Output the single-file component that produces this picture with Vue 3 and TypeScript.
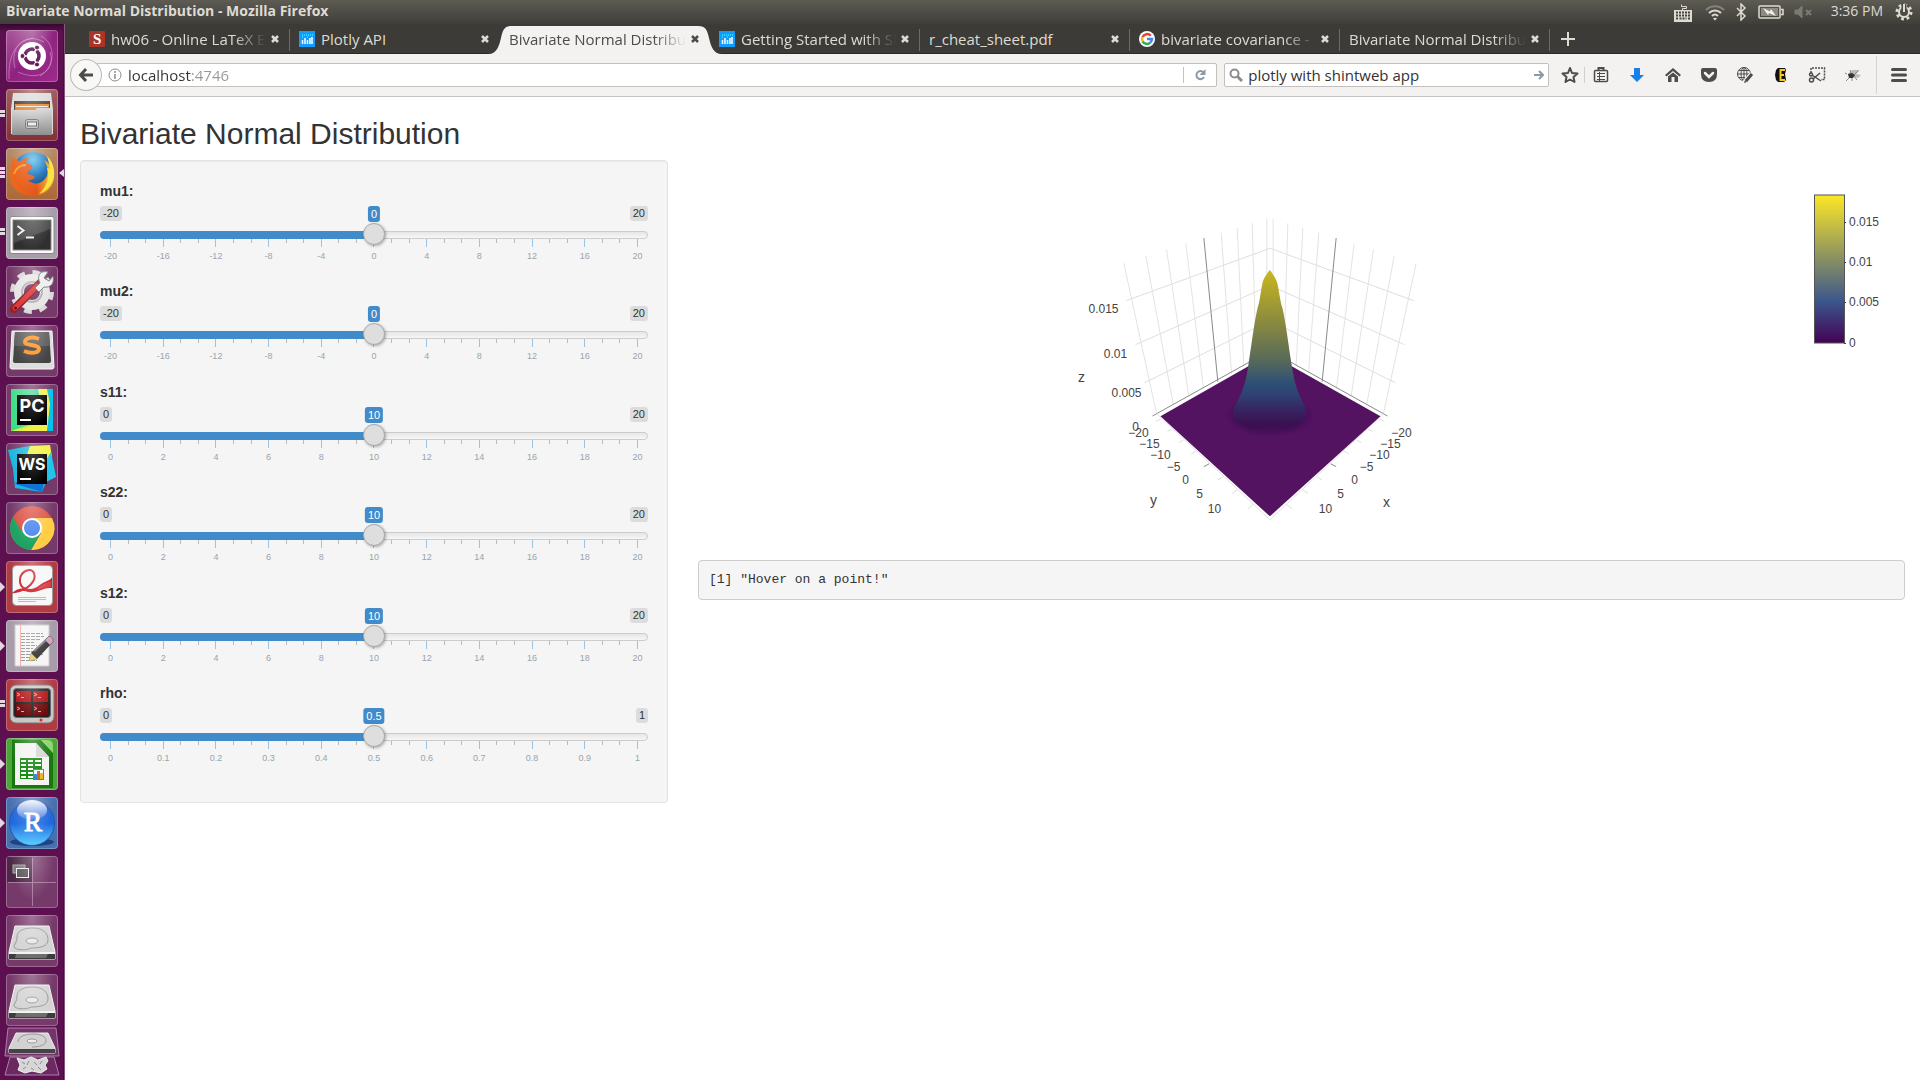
<script setup lang="ts">
import { reactive, ref } from 'vue'

interface Tab {
  title: string
  icon: 'sharelatex' | 'plotly' | 'google' | ''
  faded: boolean
}

interface Slider {
  id: string
  min: number
  max: number
  step: number
  value: number
}

interface Mark {
  x: number
  y: number
  text: string
}

const tabs: Tab[] = [
  { title: 'hw06 - Online LaTeX Editor', icon: 'sharelatex', faded: true },
  { title: 'Plotly API', icon: 'plotly', faded: false },
  { title: 'Bivariate Normal Distribution', icon: '', faded: true },
  { title: 'Getting Started with Shiny', icon: 'plotly', faded: true },
  { title: 'r_cheat_sheet.pdf', icon: '', faded: false },
  { title: 'bivariate covariance - Google', icon: 'google', faded: true },
  { title: 'Bivariate Normal Distribution', icon: '', faded: true },
]
const activeTab = ref(2)
const address = ref('localhost:4746')
const query = ref('plotly with shintweb app')

const sliders = reactive<Slider[]>([
  { id: 'mu1', min: -20, max: 20, step: 1, value: 0 },
  { id: 'mu2', min: -20, max: 20, step: 1, value: 0 },
  { id: 's11', min: 0, max: 20, step: 1, value: 10 },
  { id: 's22', min: 0, max: 20, step: 1, value: 10 },
  { id: 's12', min: 0, max: 20, step: 1, value: 10 },
  { id: 'rho', min: 0, max: 1, step: 0.1, value: 0.5 },
])

const percent = (s: Slider) => ((s.value - s.min) / (s.max - s.min)) * 100
const gridLabels = (s: Slider) =>
  Array.from({ length: 11 }, (_, i) => Number((s.min + ((s.max - s.min) * i) / 10).toFixed(1)))

// Wall lines of the left pane; the right pane is the mirror image.
const wallLines = [
  [193, 190, 291, 640],
  [259, 168, 341, 612],
  [321, 148, 388, 588],
  [379, 130, 432, 566],
  [485, 98, 516, 520],
  [533, 84, 553, 498],
  [578, 70, 590, 480],
  [622, 57, 622, 460],
]
const levels = [
  [200, 302, 631, 145],
  [228, 434, 631, 257],
  [256, 548, 631, 362],
]
const edgeTicks = [
  [289, 664, 303, 657],
  [324, 694, 338, 687],
  [358, 728, 372, 720],
  [395, 762, 409, 754],
  [475, 840, 491, 830],
  [518, 880, 534, 869],
  [566, 926, 582, 913],
]

const yMarks: Mark[] = [
  { x: 79, y: 237, text: '−20' },
  { x: 90, y: 248, text: '−15' },
  { x: 101, y: 259, text: '−10' },
  { x: 114, y: 271, text: '−5' },
  { x: 126, y: 284, text: '0' },
  { x: 140, y: 298, text: '5' },
  { x: 155, y: 313, text: '10' },
]
const xMarks: Mark[] = [
  { x: 342, y: 237, text: '−20' },
  { x: 331, y: 248, text: '−15' },
  { x: 320, y: 259, text: '−10' },
  { x: 307, y: 271, text: '−5' },
  { x: 295, y: 284, text: '0' },
  { x: 281, y: 298, text: '5' },
  { x: 266, y: 313, text: '10' },
]
const zMarks: Mark[] = [
  { x: 44, y: 113, text: '0.015' },
  { x: 56, y: 158, text: '0.01' },
  { x: 67, y: 197, text: '0.005' },
  { x: 76, y: 231, text: '0' },
]
const scaleMarks: Mark[] = [
  { x: 36, y: 62, text: '0.015' },
  { x: 36, y: 102, text: '0.01' },
  { x: 36, y: 142, text: '0.005' },
  { x: 36, y: 183, text: '0' },
]
</script>

<template>
  <div class="desktop">
    <header class="panel">
      <span class="panel-title">Bivariate Normal Distribution - Mozilla Firefox</span>
      <div class="indicators">
        <svg class="i-kbd" viewBox="0 0 20 20" width="20" height="20" fill="none" stroke="#dfdbd2">
          <path d="M9.500 8V6.500H13.500V4.500H8.500V2.500" />
          <rect x="1.500" y="8.500" width="17" height="11" fill="#dfdbd2" />
          <path d="M3 10.500H17M3 13.500H17M3 16.500H5M15 16.500H17M6.500 16.500H13.500" stroke="#45443f" stroke-width="2" stroke-dasharray="2 1" />
        </svg>
        <svg class="i-wifi" viewBox="0 0 22 18" width="22" height="18" fill="none" stroke="#dfdbd2" stroke-width="2">
          <path d="M2 7C7 2 15 2 20 7" stroke="#85827a" />
          <path d="M5 10C8.500 6.500 13.500 6.500 17 10M8 13C10 11 12 11 14 13" />
          <path d="M9 15.500L11 17.500L13 15.500Q11 14 9 15.500Z" fill="#dfdbd2" stroke="none" />
        </svg>
        <svg class="i-bt" viewBox="0 0 12 18" width="12" height="18" fill="none" stroke="#dfdbd2" stroke-width="1.500">
          <path d="M2 5L10 13L6 17V1L10 5L2 13" />
        </svg>
        <svg class="i-bat" viewBox="0 0 26 14" width="26" height="14" fill="none" stroke="#dfdbd2" stroke-width="1.500">
          <rect x="1" y="1" width="21" height="12" rx="1" />
          <path d="M23 4.500H25V9.500H23" />
          <rect x="3" y="3" width="17" height="8" fill="#8d8a82" stroke="none" />
          <path d="M5 3L12 6.500L13 4L18 11L11 8L10 10Z" fill="#f4f1ea" stroke="none" />
        </svg>
        <svg class="i-vol" viewBox="0 0 20 14" width="20" height="14" fill="#7d7a73" stroke="#7d7a73">
          <path d="M1 5H4L8 1V13L4 9H1Z" />
          <path d="M12 5L17 10M17 5L12 10" stroke-width="2" />
        </svg>
        <time class="clock">3:36 PM</time>
        <svg class="i-gear" viewBox="0 0 18 18" width="18" height="18" fill="none" stroke="#dfdbd2">
          <circle cx="9" cy="9" r="7" stroke-width="3" stroke-dasharray="2.750 2.750" />
          <circle cx="9" cy="9" r="5" stroke-width="2" />
          <path d="M9 1V9" stroke="#4b4a44" stroke-width="5" />
          <path d="M9 1V9" stroke-width="2" />
        </svg>
      </div>
    </header>

    <div class="body">
      <nav class="launcher" aria-label="Launcher">
        <a class="tile dash" href="#" aria-label="Dash">
          <svg viewBox="0 0 52 52">
            <g fill="none" stroke="#d79bc8" stroke-opacity=".6">
              <path d="M3 49C2 22 12 10 28 8M9 38C3 16 20 2 38 12M44 22C50 40 34 52 12 42M35 6C50 14 50 36 34 46" />
            </g>
            <circle cx="26" cy="26" r="14" fill="#fff" />
            <circle cx="26" cy="26" r="7" fill="none" stroke="#5a0f4e" stroke-width="3.500" />
            <path d="M26 26L35 26M26 26L21 18M26 26L21 34" transform="rotate(180 26 26)" stroke="#fff" stroke-width="1.500" />
            <g fill="#5a0f4e" stroke="#fff" stroke-width="1">
              <circle cx="16.500" cy="26" r="2.500" /><circle cx="31" cy="17.500" r="2.500" /><circle cx="31" cy="34.500" r="2.500" />
            </g>
          </svg>
        </a>
        <a class="tile files" href="#" aria-label="Files">
          <svg viewBox="0 0 52 52">
            <defs>
              <linearGradient id="steel" x1="0" y1="0" x2="0" y2="1"><stop offset="0" stop-color="#d9d9d9" /><stop offset="1" stop-color="#8f8f8f" /></linearGradient>
            </defs>
            <path d="M7 4H45L47 20V45H5V20Z" fill="#dcdcdc" />
            <path d="M8 12H44V24H8Z" fill="#54453c" />
            <path d="M9 15H43V22H9Z" fill="#e08b35" /><path d="M10 17H42V18H10Z" fill="#fbeadb" />
            <path d="M6 21H29L31 19H46V46H6Z" fill="url(#steel)" />
            <rect x="19.500" y="30.500" width="13" height="9" rx="2" fill="#c8c8c8" stroke="#777" />
            <rect x="21.500" y="33" width="9" height="4" fill="#eee" stroke="#666" />
          </svg>
          <i class="pips two"></i>
        </a>
        <a class="tile firefox" href="#" aria-label="Firefox">
          <svg viewBox="0 0 52 52">
            <defs>
              <radialGradient id="globe" cx=".5" cy=".2" r=".8"><stop offset="0" stop-color="#5fc3f0" /><stop offset=".5" stop-color="#1c6fb8" /><stop offset="1" stop-color="#123a78" /></radialGradient>
              <linearGradient id="fox" x1="0" y1="0" x2="1" y2="0"><stop offset="0" stop-color="#ee6a1d" /><stop offset=".6" stop-color="#e4561b" /><stop offset="1" stop-color="#fbd735" /></linearGradient>
            </defs>
            <circle cx="27" cy="24" r="20" fill="url(#globe)" />
            <path d="M8 9C9 12 12 13 15 13C18 10 21 9 23 10C20 12 20 15 21 16C25 16 27 17 26 20C25 22 22 22 21 25C22 27 25 26 28 28C30 30 26 33 22 32C27 37 34 36 38 32C43 27 43 20 38 12C44 15 47 21 48 26C49 37 40 48 27 48C14 48 5 40 4 29C4 24 4 18 8 9Z" fill="url(#fox)" />
            <path d="M41 8C46 13 49 20 48 28C46 38 38 45 33 46C40 40 44 30 41 20C43 20 44 21 44 22C44 17 42 12 41 8Z" fill="#fbe344" />
            <path d="M8 26C10 20 14 17 20 17" fill="none" stroke="#f9a03b" stroke-width="2" />
          </svg>
          <i class="pips three"></i><i class="focus"></i>
        </a>
        <a class="tile term" href="#" aria-label="Terminal">
          <svg viewBox="0 0 52 52">
            <rect x="4" y="9.500" width="44" height="37" rx="2" fill="#fafafa" stroke="#888" />
            <rect x="7" y="13" width="38" height="30" fill="#2e2f2e" stroke="#8a8a8a" />
            <path d="M8 14H44V22L8 36Z" fill="#4b4c4b" />
            <path d="M11.500 19L17.500 23.500L11.500 28M20 30.500H28" fill="none" stroke="#eee" stroke-width="2" />
          </svg>
          <i class="pips two"></i>
        </a>
        <a class="tile clear" href="#" aria-label="System Settings">
          <svg viewBox="0 0 52 52">
            <circle cx="26" cy="26" r="19.500" fill="none" stroke="#d9d9d9" stroke-width="5" stroke-dasharray="7.700 7.600" />
            <circle cx="26" cy="26" r="13" fill="none" stroke="#e6e6e6" stroke-width="10" />
            <circle cx="26" cy="26" r="10" fill="none" stroke="#b5b5b5" stroke-width="2" />
            <path d="M8 43L34 17" stroke="#9a1f22" stroke-width="8" stroke-linecap="round" />
            <path d="M9 42L31 20" stroke="#dd3b3d" stroke-width="5" stroke-linecap="round" />
            <path d="M29 22L34 17C30 9 35 4 42 6L38 12L43 15L47 10C49 18 44 22 38 21L33 26Z" fill="#eee" stroke="#777" />
            <circle cx="9.500" cy="42" r="1.500" fill="#611" />
          </svg>
        </a>
        <a class="tile clear" href="#" aria-label="Sublime Text">
          <svg viewBox="0 0 52 52">
            <path d="M6 6H46L48 42Q48 44 46 44H6Q4 44 4 42Z" fill="#ddd" stroke="#f5f5f5" />
            <path d="M9 7H43L45 36Q45 38 43 38H9Q7 38 7 36Z" fill="#444" />
            <path d="M9 7H43L44 21H8Z" fill="#5c5c5c" />
            <path d="M33 14C26 11 19 13 19 17C19 21 33 19 33 24C33 28 25 29 18 26" fill="none" stroke="#ff9426" stroke-width="4" />
          </svg>
        </a>
        <a class="tile clear" href="#" aria-label="PyCharm">
          <svg viewBox="0 0 52 52">
            <defs>
              <linearGradient id="pc" x1="0" y1="0" x2="1" y2="0"><stop offset="0" stop-color="#39df84" /><stop offset=".5" stop-color="#5ad69a" /><stop offset="1" stop-color="#11bce9" /></linearGradient>
            </defs>
            <rect x="5" y="5" width="42" height="42" fill="url(#pc)" />
            <path d="M5 47L26 40H43L36 47Z" fill="#cdf251" /><path d="M32 5H42L47 20L41 47H12L38 38Z" fill="#f2f04c" />
            <path d="M41 5H47V47H41L44 20Z" fill="#0bc0e8" />
            <rect x="11" y="11" width="30" height="30" fill="#000" />
            <text x="26" y="28" text-anchor="middle" font-size="18" font-weight="700" fill="#fff">PC</text>
            <rect x="14" y="35" width="11" height="2" fill="#fff" />
          </svg>
        </a>
        <a class="tile clear" href="#" aria-label="WebStorm">
          <svg viewBox="0 0 52 52">
            <path d="M2 7L23 3L36 10L44 30L36 49L9 45L7 26Z" fill="#1bb7dc" />
            <path d="M9 41L18 30H40L36 49Z" fill="#0f72d6" />
            <path d="M24 3L44 2L46 14L40 24L20 14Z" fill="#f1f23f" />
            <path d="M45 9L50 34L38 40L36 24Z" fill="#22c4ec" />
            <rect x="11" y="11" width="30" height="30" fill="#000" />
            <text x="26" y="27" text-anchor="middle" font-size="16" font-weight="700" fill="#fff">WS</text>
            <rect x="14" y="35" width="11" height="2" fill="#fff" />
          </svg>
        </a>
        <a class="tile clear" href="#" aria-label="Chrome">
          <svg viewBox="0 0 52 52">
            <circle cx="26" cy="26" r="22" fill="#dd5144" />
            <path d="M26 26V16H46A22 22 0 0 1 25 48L35 31Z" fill="#ffcd46" />
            <path d="M7 15A22 22 0 0 0 25 48L35 31L26 26L16 30Z" fill="#1da462" />
            <circle cx="26" cy="26" r="10" fill="#fff" /><circle cx="26" cy="26" r="8" fill="#4a86ee" />
          </svg>
        </a>
        <a class="tile red" href="#" aria-label="Document Viewer">
          <svg viewBox="0 0 52 52">
            <rect x="6.500" y="4.500" width="40" height="40" rx="4" fill="#f7f7f7" stroke="#9b9b9b" />
            <path d="M9 31C22 29 31 20 28 12C25 6 15 10 14 18C13 28 24 33 34 25C39 21 43 21 45 19V26C36 25 31 32 23 30C17 29 14 27 9 31Z" fill="none" stroke="#cf2430" stroke-width="2" />
            <path d="M33 26L45 20V26L33 28Z" fill="#d8404a" />
            <path d="M12 36.500H40M12 38.500H40M12 40.500H30" stroke="#bbb" />
          </svg>
          <i class="arrow"></i>
        </a>
        <a class="tile grey" href="#" aria-label="Text Editor">
          <svg viewBox="0 0 52 52">
            <path d="M9 5H43V46H9Z" fill="#f5f5f5" stroke="#ccc" />
            <path d="M15 13.500H37M15 16.500H38M15 19.500H34M15 22.500H28M15 25.500H31M15 28.500H27M15 31.500H38M15 34.500H37M15 37.500H28M15 40.500H31" stroke="#999" stroke-dasharray="4 1" />
            <path d="M14.500 5V46" stroke="#f3b1a8" />
            <path d="M41 18L46 23L31 39L23 41L25 33Z" fill="#3b3b3b" />
            <path d="M28 31L41 19" stroke="#888" stroke-width="2" />
            <path d="M25 33L31 39L23 41Z" fill="#e8d36a" />
            <path d="M39 20L43 16Q48 17 47 22L44 25Z" fill="#dba0c4" stroke="#777" />
          </svg>
          <i class="arrow"></i>
        </a>
        <a class="tile red" href="#" aria-label="Terminator">
          <svg viewBox="0 0 52 52">
            <rect x="4" y="6" width="44" height="38" rx="6" fill="#c9c7c3" stroke="#777" />
            <rect x="7.500" y="9.500" width="37" height="29" rx="3" fill="#222" stroke="#666" />
            <path d="M10 12H25V23H10ZM27 12H42V23H27Z" fill="#b11216" /><path d="M10 25H25V36H10ZM27 25H42V36H27Z" fill="#6d0a0c" />
            <path d="M11 14L14 15.500L11 17M15 18.500H18M28 14L31 15.500L28 17M32 18.500H35M11 28L14 29.500L11 31M15 32.500H18M28 28L31 29.500L28 31M32 32.500H35" fill="none" stroke="#e9a3a3" />
            <circle cx="35" cy="41" r="1.500" fill="#e22" />
          </svg>
          <i class="pips two"></i>
        </a>
        <a class="tile green" href="#" aria-label="LibreOffice Calc">
          <svg viewBox="0 0 52 52">
            <path d="M6 2H35L47 15V50H6Z" fill="#18780f" /><path d="M35 2H42Q47 2 47 8V15Z" fill="#8bd468" />
            <path d="M9 5H30L43 19V47H9Z" fill="#f3f3f1" /><path d="M30 5V19H43Z" fill="#d5d5d5" />
            <rect x="14" y="20" width="22" height="21" fill="#128a0e" />
            <path d="M15 22H20V24H15ZM22 22H27V24H22ZM29 22H35V24H29ZM15 26H20V28H15ZM22 26H27V28H22ZM29 26H35V28H29ZM15 30H20V32H15ZM22 30H27V32H22ZM15 34H20V36H15ZM22 34H27V36H22ZM15 38H20V40H15ZM22 38H27V40H22Z" fill="#fff" />
            <rect x="27.500" y="31.500" width="10" height="10" fill="#fff" stroke="#777" />
            <path d="M28 36H31V41H28Z" fill="#2d8bd0" /><path d="M31 33H34V41H31Z" fill="#d1641b" /><path d="M34 35H37V41H34Z" fill="#e5b824" />
          </svg>
          <i class="arrow"></i>
        </a>
        <a class="tile blue" href="#" aria-label="RStudio">
          <svg viewBox="0 0 52 52">
            <defs>
              <linearGradient id="ball" x1="0" y1="0" x2="0" y2="1"><stop offset="0" stop-color="#2a62cf" /><stop offset=".5" stop-color="#1f6ae0" /><stop offset="1" stop-color="#5ed0ff" /></linearGradient>
              <linearGradient id="shine" x1="0" y1="0" x2="0" y2="1"><stop offset="0" stop-color="#fff" stop-opacity=".95" /><stop offset="1" stop-color="#fff" stop-opacity=".1" /></linearGradient>
            </defs>
            <ellipse cx="26" cy="45" rx="22" ry="4" fill="#1d4380" />
            <circle cx="26" cy="26" r="22.500" fill="url(#ball)" stroke="#2357ac" />
            <ellipse cx="26" cy="13" rx="15" ry="10" fill="url(#shine)" />
            <text x="18" y="34" class="serif" font-size="27" fill="#fff" stroke="#fff">R</text>
          </svg>
          <i class="arrow"></i>
        </a>
        <a class="tile clear" href="#" aria-label="Workspace Switcher">
          <svg viewBox="0 0 52 52">
            <rect x="1" y="1" width="25" height="25" fill="#241321" fill-opacity=".5" />
            <path d="M26.500 2V50M2 26.500H50" stroke="#a97aa0" />
            <rect x="7" y="9" width="12" height="8" fill="#777" stroke="#aaa" />
            <rect x="10.500" y="12.500" width="12" height="9" fill="#555" stroke="#eee" />
          </svg>
        </a>
        <a v-for="n in 2" :key="n" class="tile clear" href="#" aria-label="Disk">
          <svg viewBox="0 0 52 52">
            <path d="M9 11H43L49 37V44H3V37Z" fill="#d4d4d4" stroke="#f2f2f2" />
            <path d="M3 37H49V44H3Z" fill="#3c3c3c" /><path d="M10 39H42L40 43H9Z" fill="#6d6d6d" /><path d="M3 37H49V39H3Z" fill="#f3f3f3" />
            <path d="M11 22C11 15 19 13 27 13C37 13 42 18 42 25C42 31 35 33 25 33C20 36 9 35 8 32C8 29 11 28 11 22Z" fill="none" stroke="#9a9a9a" />
            <ellipse cx="26" cy="26" rx="6" ry="3" fill="#e8e8e8" stroke="#999" />
          </svg>
        </a>
        <a class="tile folded" href="#" aria-label="Trash">
          <svg viewBox="0 0 56 50">
            <path d="M4 1H52L55 29H1Z" fill="#fff" fill-opacity=".15" stroke="#a982a1" />
            <path d="M6 30H50L55 48H1Z" fill="#fff" fill-opacity=".1" stroke="#a982a1" />
            <path d="M12 6H44L51 21V26H5V21Z" fill="#d2d2d2" stroke="#eee" /><path d="M5 22H51V26H5Z" fill="#444" />
            <path d="M14 15C14 9 22 7 29 7C38 7 42 10 42 14C42 18 35 20 28 20" fill="none" stroke="#999" />
            <ellipse cx="28" cy="14" rx="5" ry="2" fill="#eee" stroke="#999" />
            <path d="M13 31L20 33L27 30L34 33L42 30L44 34L41 38L43 42L37 46L28 44L21 46L14 43L16 38Z" fill="#d6d6d6" stroke="#eee" />
            <path d="M18 35L21 37M25 34L23 38M30 35L33 38M38 34L36 37M19 42L22 40M27 41L30 43M34 40L37 43" fill="none" stroke="#8f8f8f" />
          </svg>
        </a>
      </nav>

      <div class="window">
        <div class="tabbar" role="tablist">
          <div v-for="(tab, i) in tabs" :key="i" class="tab" :class="{ active: i === activeTab, lined: i !== activeTab && i + 1 !== activeTab }">
            <svg v-if="i === activeTab" class="tab-shape" viewBox="0 0 234 30" preserveAspectRatio="none">
              <path d="M0 30C9 30 11 22 13 14C15 6 16 2 24 2H210C218 2 219 6 221 14C223 22 225 30 234 30Z" fill="#f3f2f0" />
            </svg>
            <button class="tab-main" type="button" role="tab" :aria-selected="i === activeTab" @click="activeTab = i">
              <svg v-if="tab.icon === 'sharelatex'" viewBox="0 0 16 16" width="16" height="16">
                <rect width="16" height="16" rx="1" fill="#a93529" /><text x="4" y="13" class="serif" font-size="15" font-weight="700" fill="#fff">S</text>
              </svg>
              <svg v-else-if="tab.icon === 'plotly'" viewBox="0 0 16 16" width="16" height="16">
                <rect width="16" height="16" fill="#119dff" />
                <path d="M3.500 9V13M6 7V13M8.500 9V13M11 7V13M13 6V13" stroke="#fff" stroke-width="1.500" />
                <path d="M3 4H14M3 6H5M8 6H10" stroke="#5ff" stroke-dasharray="1 1" />
              </svg>
              <svg v-else-if="tab.icon === 'google'" viewBox="0 0 16 16" width="16" height="16" fill="none" stroke-width="2.500">
                <circle cx="8" cy="8" r="8" fill="#fff" />
                <path d="M11.800 4.800A5 5 0 0 0 3.500 6" stroke="#ea4335" /><path d="M3.500 6A5 5 0 0 0 3.600 10.300" stroke="#fbbc05" />
                <path d="M3.600 10.300A5 5 0 0 0 11.300 11.600" stroke="#34a853" /><path d="M11.300 11.600A5 5 0 0 0 13 8H8" stroke="#4285f4" />
              </svg>
              <span class="tab-title" :class="{ faded: tab.faded }">{{ tab.title }}</span>
            </button>
            <button class="tab-close" type="button" aria-label="Close tab">
              <svg viewBox="0 0 10 10" width="10" height="10"><path d="M2 2L8 8M8 2L2 8" stroke="currentColor" stroke-width="2.500" /></svg>
            </button>
          </div>
          <button class="new-tab" type="button" aria-label="New tab">
            <svg viewBox="0 0 16 16" width="16" height="16"><path d="M8 1V15M1 8H15" stroke="#dfdbd2" stroke-width="2" /></svg>
          </button>
        </div>

        <div class="toolbar">
          <button class="back" type="button" aria-label="Back">
            <svg viewBox="0 0 16 16" width="16" height="16" fill="none" stroke="#4c4c4c" stroke-width="3"><path d="M8 2L2.500 8L8 14M3 8H15" /></svg>
          </button>
          <div class="url">
            <svg viewBox="0 0 14 14" width="14" height="14" fill="none" stroke="#8c8c8c"><circle cx="7" cy="7" r="6" /><path d="M7 6V11M7 3V5" stroke-width="1.500" /></svg>
            <input v-model="address" class="url-input" type="text" aria-label="Address" />
            <button class="reload" type="button" aria-label="Reload">
              <svg viewBox="0 0 12 12" width="12" height="12" fill="none" stroke="#8d99a6" stroke-width="2"><path d="M9.500 3.500A4 4 0 1 0 10 8" /><path d="M11.500 0V6H5.500Z" fill="#8d99a6" stroke="none" /></svg>
            </button>
          </div>
          <div class="search">
            <svg viewBox="0 0 14 14" width="14" height="14" fill="none" stroke="#8c8c8c" stroke-width="2"><circle cx="5.500" cy="5.500" r="4" /><path d="M8.500 8.500L13 13" stroke-width="3" /></svg>
            <input v-model="query" type="text" aria-label="Search" />
            <svg viewBox="0 0 10 10" width="10" height="10" fill="none" stroke="#8d99a6" stroke-width="2"><path d="M0 5H8M5 1L9 5L5 9" /></svg>
          </div>
          <div class="tools">
            <button type="button" aria-label="Bookmark">
              <svg viewBox="0 0 18 18" fill="none" stroke="#4c4c4c" stroke-width="2"><path d="M9 2L11 7L16.500 7.500L12.500 11L13.500 16L9 13.500L4.500 16L5.500 11L1.500 7.500L7 7Z" stroke-linejoin="round" /></svg>
            </button>
            <button type="button" aria-label="Bookmarks list" class="after-line">
              <svg viewBox="0 0 18 18" fill="none" stroke="#4c4c4c"><rect x="2.500" y="4.500" width="13" height="11" rx="1" stroke-width="1.500" /><path d="M6.500 4V2H11.500V4" stroke-width="2" /><path d="M5 7.500H13M5 10.500H13M5 13.500H13M7.500 6V15" /></svg>
            </button>
            <button type="button" aria-label="Downloads"><svg viewBox="0 0 18 18"><path d="M6 2H12V9H16L9 16L2 9H6Z" fill="#1a7fe8" /></svg></button>
            <button type="button" aria-label="Home"><svg viewBox="0 0 18 18"><path d="M9 2L17 9L15.500 10.500L9 5L2.500 10.500L1 9ZM4 10.500L9 6.500L14 10.500V16H10.500V11H7.500V16H4Z" fill="#4c4c4c" /></svg></button>
            <button type="button" aria-label="Pocket"><svg viewBox="0 0 18 18"><path d="M3 2H15Q17 2 17 4V8Q17 16 9 16Q1 16 1 8V4Q1 2 3 2Z" fill="#4c4c4c" /><path d="M5 7L9 11L13 7" fill="none" stroke="#f3f2f0" stroke-width="2.500" stroke-linecap="round" /></svg></button>
            <button type="button" aria-label="Web developer"><svg viewBox="0 0 18 18" fill="none" stroke="#4c4c4c"><circle cx="8" cy="8" r="6.500" /><ellipse cx="8" cy="8" rx="3" ry="6.500" /><path d="M8 1V15M1.500 8H15M3 4.500H13M3 11.500H9" /><path d="M16 8L10 15L8 17" stroke="#f3f2f0" stroke-width="5" /><path d="M16 8L10 15" stroke-width="3" /><path d="M9 14L8 17L11 16Z" fill="#4c4c4c" stroke="none" /></svg></button>
            <button type="button" aria-label="Extension"><svg viewBox="0 0 18 18"><path d="M6 2H13L14 4L13 8L14 14L12 16H6L4 14L3 9L4 4Z" fill="#111" /><path d="M13 4H8.500V14H13M8 9H12" fill="none" stroke="#f5cc1c" stroke-width="2" /></svg></button>
            <button type="button" aria-label="Screenshot"><svg viewBox="0 0 18 18" fill="none" stroke="#4c4c4c"><path d="M3 7V2H16.500V13.500H13" stroke-width="1.500" stroke-dasharray="2 1" /><path d="M4 9L13 15M5 13L12 7" stroke-width="1.500" /><circle cx="3.500" cy="14" r="2" stroke-width="1.500" /><circle cx="3" cy="8.500" r="1.500" stroke-width="1.500" /></svg></button>
            <button type="button" aria-label="Firebug"><svg viewBox="0 0 18 18"><path d="M4 8L8 4L16 4L12 8L17 9L14 12L9 10Z" fill="#bbb" /><path d="M4 8L8 7L11 9L9 12L5 12Z" fill="#333" /><path d="M3 8L1 7M5 12L2 15M8 12L8 15M10 10L13 14M7 7L6 4M11 8L14 5" stroke="#888" /></svg></button>
            <button type="button" aria-label="Menu" class="menu"><svg viewBox="0 0 18 18" stroke="#4c4c4c" stroke-width="3" stroke-linecap="round"><path d="M2.500 3.500H15.500M2.500 9H15.500M2.500 14.500H15.500" /></svg></button>
          </div>
        </div>

        <main class="page">
          <h2>Bivariate Normal Distribution</h2>
          <div class="row">
            <form class="well">
              <div v-for="s in sliders" :key="s.id" class="group">
                <label :for="s.id">{{ s.id }}:</label>
                <div class="bubbles">
                  <span class="bound">{{ s.min }}</span>
                  <output class="single" :for="s.id" :style="{ left: percent(s) + '%' }">{{ s.value }}</output>
                  <span class="bound">{{ s.max }}</span>
                </div>
                <div class="rail">
                  <div class="bar" :style="{ width: percent(s) + '%' }"></div>
                  <input :id="s.id" v-model.number="s.value" type="range" :min="s.min" :max="s.max" :step="s.step" />
                </div>
                <div class="ticks"><i v-for="n in 31" :key="n" :class="{ major: n % 3 === 1 }"></i></div>
                <div class="numbers"><span v-for="v in gridLabels(s)" :key="v">{{ v }}</span></div>
              </div>
            </form>

            <section class="main">
              <div class="plot">
                <svg class="scene" viewBox="-4 -40 400 400" role="img" aria-label="Surface plot">
                  <defs>
                    <linearGradient id="peak" gradientUnits="userSpaceOnUse" x1="0" y1="210" x2="0" y2="706">
                      <stop offset="0" stop-color="#c9b81f" /><stop offset=".16" stop-color="#aaa02f" /><stop offset=".38" stop-color="#7c8146" />
                      <stop offset=".55" stop-color="#56695a" /><stop offset=".69" stop-color="#2d4e76" /><stop offset=".76" stop-color="#2f4073" />
                      <stop offset=".85" stop-color="#37235f" /><stop offset=".94" stop-color="#3b0f52" /><stop offset="1" stop-color="#4c0f5b" />
                    </linearGradient>
                    <radialGradient id="foot"><stop offset=".55" stop-color="#3b1458" /><stop offset=".8" stop-color="#480f5c" /><stop offset="1" stop-color="#531361" /></radialGradient>
                  </defs>
                  <g transform="scale(.33333)" fill="none" stroke-width="3">
                    <g v-for="side in 2" :key="side" :transform="side === 2 ? 'translate(1263 0) scale(-1 1)' : undefined">
                      <path v-for="(l, i) in wallLines" :key="'w' + i" :d="`M${l[0]} ${l[1]}L${l[2]} ${l[3]}`" stroke="#e3e3e3" />
                      <path v-for="(l, i) in levels" :key="'l' + i" :d="`M${l[0]} ${l[1]}L${l[2]} ${l[3]}`" stroke="#dedede" />
                      <path v-for="(l, i) in edgeTicks" :key="'t' + i" :d="`M${l[0]} ${l[1]}L${l[2]} ${l[3]}`" stroke="#dcdcdc" />
                      <path d="M433 114L475 545M433 800L450 791" stroke="#8a8a8a" />
                      <path d="M279 648L631 452" stroke="#888" />
                      <path d="M291 640L631 959" stroke="#e0e0e0" />
                    </g>
                    <path d="M303 649L631 462L963 649L631 949Z" fill="#531361" />
                    <ellipse cx="631" cy="646" rx="135" ry="66" fill="url(#foot)" />
                    <path d="M631 210C623 220 612 236 609 248C603 275 602 300 594 325C583 375 577 430 567 492C560 545 548 580 528 614C515 640 520 660 545 675C590 700 672 700 717 675C742 660 747 640 734 614C714 580 704 545 696 492C686 430 680 375 669 325C661 300 659 270 653 248C650 236 639 220 631 210Z" fill="url(#peak)" />
                  </g>
                  <g class="marks middle">
                    <text v-for="m in [...zMarks, ...yMarks, ...xMarks]" :key="m.x + m.text" :x="m.x" :y="m.y">{{ m.text }}</text>
                  </g>
                  <g class="names middle">
                    <text x="22" y="182">z</text><text x="94" y="305">y</text><text x="327" y="307">x</text>
                  </g>
                </svg>
                <svg class="colorbar" viewBox="0 0 92 400" role="img" aria-label="Colour scale">
                  <defs>
                    <linearGradient id="scale" x1="0" y1="1" x2="0" y2="0">
                      <stop offset="0" stop-color="#440154" /><stop offset=".28" stop-color="#3b568c" /><stop offset="1" stop-color="#fde725" />
                    </linearGradient>
                  </defs>
                  <rect x="1.500" y="35" width="30" height="148" fill="url(#scale)" stroke="#555" />
                  <path d="M31 62.500H33M31 102.500H33M31 142.500H33M31 183.500H33" stroke="#444" />
                  <g class="marks"><text v-for="m in scaleMarks" :key="m.text" :x="m.x" :y="m.y + 4">{{ m.text }}</text></g>
                </svg>
              </div>
              <pre>[1] "Hover on a point!"</pre>
            </section>
          </div>
        </main>
      </div>
    </div>
  </div>
</template>

<style>
body {
  margin: 0;
  background: #fff;
}
</style>

<style scoped>
.desktop {
  min-height: 100vh;
  display: flex;
  flex-direction: column;
  font-family: "Open Sans", "Noto Sans", sans-serif;
  background: #fff;
}
button {
  border: 0;
  padding: 0;
  background: none;
  font: inherit;
  color: inherit;
}
svg {
  display: block;
  flex: none;
}
.serif {
  font-family: "Liberation Serif", serif;
}

.panel {
  height: 24px;
  display: flex;
  align-items: center;
  justify-content: space-between;
  padding: 0 7px 0 6px;
  background: linear-gradient(#5f5d50, #595751 3px, #3f3e39);
  color: #dfdbd2;
}
.panel-title {
  font-size: 14px;
  line-height: 22px;
  height: 24px;
  font-weight: 700;
}
.indicators {
  display: flex;
  align-items: center;
}
.i-wifi { margin-left: 11px; }
.i-bt { margin-left: 9px; }
.i-bat { margin-left: 11px; }
.i-vol { margin-left: 10px; }
.clock {
  margin-left: 17px;
  font-size: 14px;
  line-height: 22px;
  height: 24px;
}
.i-gear { margin-left: 12px; }

.body {
  flex: 1;
  display: flex;
}
.launcher {
  width: 64px;
  flex: none;
  box-sizing: border-box;
  border-right: 1px solid #4a0a3d;
  box-shadow: 1px 0 #86567a;
  padding: 6px 0 4px 6px;
  display: flex;
  flex-direction: column;
  gap: 7px;
  background: linear-gradient(rgba(30, 0, 25, .6), transparent 8px), #5c1050;
}
.tile {
  position: relative;
  width: 52px;
  height: 52px;
  border-radius: 4px;
  box-shadow: inset 0 0 0 1px rgba(255, 255, 255, .25);
  flex: none;
}
.tile::after {
  content: "";
  position: absolute;
  inset: 0;
  border-radius: 4px;
  background: radial-gradient(ellipse at 50% 0, rgba(255, 255, 255, .3), transparent 60%);
}
.tile svg {
  width: 52px;
  height: 52px;
  font-family: Inter, sans-serif;
}
.tile .serif {
  font-family: "Liberation Serif", serif;
}
.dash { background: linear-gradient(135deg, #a9569a, #8f2280 50%, #9e2c8c); }
.files { background: linear-gradient(#a0605f, #843037); }
.firefox { background: linear-gradient(#b78c6a, #ad6836); }
.term { background: #a89cab; }
.clear { background: #763a6a; }
.red { background: #b03b42; }
.grey { background: #a89cab; }
.green { background: #4ca53a; }
.blue { background: #4770ae; }
.folded {
  height: 50px;
  margin: -6px 0 0 -2px;
  width: 56px;
  box-shadow: none;
}
.folded::after { display: none; }
.folded svg { width: 56px; height: 50px; }
.pips, .arrow, .focus {
  position: absolute;
  left: -6px;
  top: 21px;
  width: 5px;
}
.pips { height: 7px; background: repeating-linear-gradient(#e3d8e1 0 3px, transparent 3px 4px); }
.pips.three { top: 19px; height: 11px; }
.arrow {
  top: 21px;
  width: 0;
  border: 5px solid transparent;
  border-left-color: #e3d8e1;
  border-right: 0;
}
.focus {
  left: 53px;
  width: 0;
  border: 4px solid transparent;
  border-right: 5px solid #e3d8e1;
  border-left: 0;
}

.window {
  flex: 1;
  min-width: 0;
  margin-left: 1px;
  display: flex;
  flex-direction: column;
}
.tabbar {
  height: 30px;
  display: flex;
  align-items: center;
  padding-left: 15px;
  background: #3c3b37;
  color: #dfdbd2;
  box-shadow: inset 0 -1px #2b2a27;
  font-size: 15px;
}
.tab {
  position: relative;
  flex: 0 1 210px;
  min-width: 0;
  height: 30px;
  box-sizing: border-box;
  display: flex;
  align-items: center;
  gap: 4px;
  padding: 0 10px 0 9px;
}
.tab.lined { background: linear-gradient(#6b6a65, #6b6a65) 100% 60% / 1px 22px no-repeat; }
.tab.active { color: #4c4c4c; }
.tab-shape {
  position: absolute;
  left: -12px;
  top: 0;
  width: calc(100% + 24px);
  height: 30px;
}
.tab-main {
  position: relative;
  flex: 1;
  min-width: 0;
  display: flex;
  align-items: center;
  gap: 6px;
  text-align: left;
}
.tab-title {
  flex: 1;
  min-width: 0;
  overflow: hidden;
  white-space: nowrap;
}
.tab-title.faded {
  mask-image: linear-gradient(90deg, #000 calc(100% - 32px), transparent);
}
.tab-close {
  position: relative;
  width: 10px;
}
.new-tab { margin-left: 10px; }

.toolbar {
  height: 43px;
  box-sizing: border-box;
  display: flex;
  align-items: center;
  padding: 0 12px 0 5px;
  background: #f3f2f0;
  border-bottom: 1px solid #c4c3c0;
  font-size: 15px;
}
.back {
  position: relative;
  z-index: 1;
  width: 32px;
  height: 32px;
  box-sizing: border-box;
  border: 1px solid #bab9b7;
  border-radius: 50%;
  background: #f8f8f7;
  display: flex;
  align-items: center;
  justify-content: center;
}
.url, .search {
  height: 24px;
  box-sizing: border-box;
  border: 1px solid #c1c0bd;
  border-radius: 2px;
  background: #fff;
  display: flex;
  align-items: center;
}
.url {
  flex: 1 1 1122px;
  min-width: 0;
  margin-left: -6px;
  padding-left: 11px;
  gap: 6px;
}
input[type="text"] {
  flex: 1;
  min-width: 0;
  border: 0;
  padding: 0;
  outline: 0;
  font: inherit;
  color: #333;
  background: none;
}
.url .url-input {
  color: transparent;
  background: linear-gradient(90deg, #333 63px, #999 63px);
  background-clip: text;
}
.reload {
  width: 33px;
  height: 16px;
  border-left: 1px solid #c4c3c0;
  display: flex;
  align-items: center;
  justify-content: center;
}
.search {
  flex: 0 1 325px;
  margin-left: 7px;
  padding: 0 4px;
  gap: 4px;
}
.search input { margin-left: 1px; }
.tools {
  flex: none;
  display: flex;
  align-items: center;
  gap: 18px;
  margin-left: 12px;
}
.tools svg { width: 18px; height: 18px; }
.tools button:first-child { margin-right: -5px; }
.after-line { position: relative; }
.after-line::before {
  content: "";
  position: absolute;
  left: -8px;
  top: 1px;
  height: 16px;
  border-left: 1px solid #d0cfcc;
}
.menu {
  padding-left: 13px;
  border-left: 1px solid #d4d3d0;
  margin-left: -4px;
}
.menu svg { margin: 10px 0; }

.page {
  flex: 1;
  padding: 20px 15px;
  font-family: "Liberation Sans", Arial, sans-serif;
  font-size: 14px;
  line-height: 20px;
  color: #333;
}
h2 {
  margin: 0 0 10px;
  font-size: 30px;
  line-height: 33px;
  font-weight: 500;
}
.row {
  display: grid;
  grid-template-columns: minmax(0, 588fr) minmax(0, 1207fr);
  gap: 30px;
  align-items: start;
}
.well {
  box-sizing: border-box;
  min-height: 643px;
  padding: 20px 19px 19px;
  display: flex;
  flex-direction: column;
  justify-content: space-between;
  border: 1px solid #e3e3e3;
  border-radius: 4px;
  background: #f5f5f5;
  box-shadow: inset 0 1px 1px rgba(0, 0, 0, .05);
}
.group { height: 100px; }
.group label {
  display: block;
  font-weight: 700;
  height: 25px;
}
.bubbles {
  position: relative;
  display: flex;
  justify-content: space-between;
  height: 25px;
  font-size: 11px;
  line-height: 15px;
}
.bound, .single {
  height: 15px;
  padding: 0 3px;
  border-radius: 3px;
  background: #dcdcdc;
}
.single {
  position: absolute;
  height: 16px;
  line-height: 16px;
  transform: translateX(-50%);
  background: #428bca;
  color: #fff;
}
.rail {
  height: 8px;
  box-sizing: border-box;
  border: 1px solid #ccc;
  border-radius: 8px;
  background: linear-gradient(#dedede -50%, #fff 150%);
  position: relative;
}
.bar {
  height: 8px;
  margin: -1px 0 0 -1px;
  border-radius: 8px 0 0 8px;
  background: #428bca;
}
.rail input {
  appearance: none;
  position: absolute;
  left: -1px;
  top: -9px;
  width: calc(100% + 2px);
  height: 22px;
  margin: 0;
  background: none;
}
.rail input::-webkit-slider-thumb {
  appearance: none;
  box-sizing: border-box;
  width: 22px;
  height: 22px;
  border: 1px solid #aaa;
  border-radius: 50%;
  background: #dedede;
  box-shadow: 1px 1px 3px rgba(0, 0, 0, .3);
}
.ticks {
  display: flex;
  justify-content: space-between;
  height: 11px;
  padding: 0 10px;
}
.ticks i {
  width: 1px;
  height: 4px;
  background: #bbb;
}
.ticks .major {
  height: 8px;
  background: #9dc3e3;
}
.numbers {
  display: flex;
  justify-content: space-between;
  padding: 0 10px;
  font-size: 9px;
  line-height: 12px;
  color: #99a4ac;
}
.numbers span {
  width: 1px;
  display: flex;
  justify-content: center;
}
.plot {
  display: flex;
  height: 400px;
}
.scene {
  flex: 1;
  min-width: 0;
  height: 400px;
}
.colorbar {
  width: 92px;
  height: 400px;
}
.marks { font-size: 12px; fill: #444; }
.names { font-size: 14px; fill: #444; }
.middle { text-anchor: middle; }
pre {
  margin: 0;
  padding: 9px 10px;
  border: 1px solid #ccc;
  border-radius: 4px;
  background: #f5f5f5;
  font-family: "Liberation Mono", monospace;
  font-size: 13px;
  line-height: 20px;
}
</style>
